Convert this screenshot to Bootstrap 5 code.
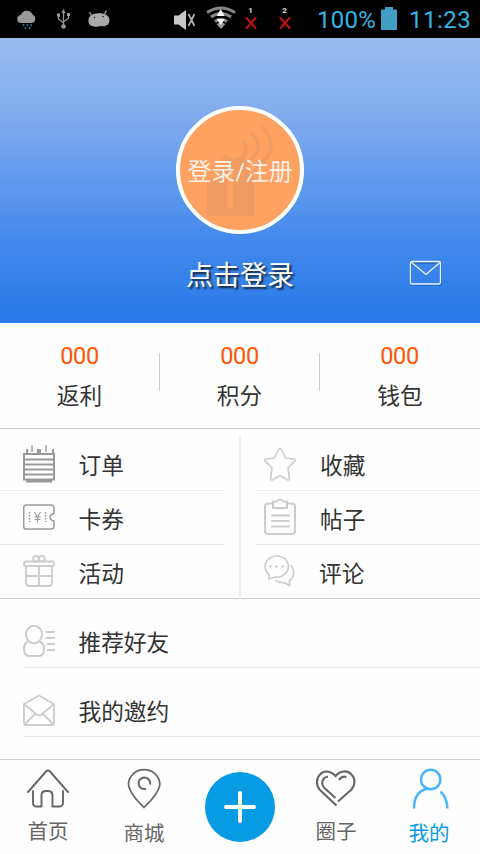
<!DOCTYPE html>
<html lang="zh-CN">
<head>
<meta charset="utf-8">
<meta name="viewport" content="width=device-width, initial-scale=1">
<title>我的</title>
<link rel="stylesheet" href="https://cdn.jsdelivr.net/npm/bootstrap@5.3.0/dist/css/bootstrap.min.css">
<style>
body{font-family:Roboto,"Noto Sans CJK SC",sans-serif;width:480px;height:854px;overflow:hidden;background:#fefefe;color:#333;line-height:1}
svg{display:block;flex:none;fill:none}
.status{height:38px;background:#000;color:#33b5e5;font-size:24px;padding:2px 9px 0 16px}
.status svg{margin-top:-2px}
.status>svg:nth-of-type(2){margin-right:-1px}
.pct{margin-left:24px;width:60px;letter-spacing:.3px}
.clock{letter-spacing:.5px;width:62px}
.hero{height:285px;background:linear-gradient(#9abcf0,#84aeef 24%,#4188eb 73%,#2878e9);color:#fff;padding-top:68px}
.avatar{width:128px;height:128px;border:4px solid #fff;background:#ffa261;display:grid;place-items:center}
.avatar>*{grid-area:1/1}
.avatar span{font-size:24px;line-height:30px;padding-top:4px;letter-spacing:-.2px;white-space:nowrap;color:#fff0e6;z-index:1}
.login{height:40px;margin-top:22px;display:grid;grid-template-columns:1fr auto 1fr}
.login b{font-weight:400;font-size:27px;line-height:40px;text-shadow:2px 2px 2px #123}
.login svg{justify-self:end;margin-right:37px;margin-top:2px}
.stats{height:106px;border-bottom:1px solid #ccc}
.stat{height:105px;padding-top:20px}
.stat:not(:last-child){background:linear-gradient(#ccc,#ccc) 100% 30px/1px 38px no-repeat}
.stat strong{font-weight:400;font-size:23.5px;line-height:26px;color:#ff5400;display:block;letter-spacing:-.4px;padding-right:1px}
.stat span{display:block;font-size:22.7px;line-height:30px;margin-top:13px;padding-right:1px}
.stat:last-child span{padding-right:0}
.menu{height:170px;border-bottom:1px solid #ccc;padding-top:8px}
.menu .left{width:239px;padding-right:15px}
.split{width:2px;background:#eee;height:162px}
.menu .right{width:239px;padding-left:15px}
.entry{height:54px;border-bottom:1px solid #eaeaea;font-size:22.7px}
.entry:last-child{border:0}
.entry:nth-child(2) svg{margin-top:-1px}
.entry:last-child svg{margin-top:-3px}
.left .entry{padding-left:23px}
.right .entry{padding-left:8px}
.entry span,.wide span{margin-left:23.500px;padding-top:7px;line-height:30px}
.right .entry span{margin-left:24px}
.entry:last-child span{padding-top:6px}
.list{height:160px;padding-left:23px}
.wide{height:69px;border-bottom:1px solid #eaeaea;font-size:22.7px}
.wide span{padding-top:22px}
.wide svg{margin-top:15px}
.tabs{height:95px;border-top:1px solid #ccc;color:#666;font-size:20.5px}
.tab{width:96px;padding-top:8px}
.tab span{line-height:24px;margin-top:10px}
.tab.low span{margin-top:12px}
.tab.low svg{margin-top:-1px;margin-bottom:1px}
.tab.me{color:#069be3}
.tab.me svg{margin:0 0 0 -3px}
.tab.me span{margin-left:-6px}
.plus{width:70px;height:70px;background:#069be3;margin-top:4px}
</style>
<script src="https://cdn.jsdelivr.net/npm/bootstrap@5.3.0/dist/js/bootstrap.bundle.min.js"></script>
</head>
<body>
<header class="status d-flex align-items-center">
<svg width="94" height="38" viewBox="16 0 94 38">
<path fill="#999" d="M21.500 23a4 4 0 0 1-.5-8 6 5.500 0 0 1 11.500-.5A4.500 4.500 0 0 1 32 23z"/>
<path stroke="#2f8299" stroke-width="1.400" d="M24 24l-.8 2M28 24l-.8 2M31.500 24l-.8 2M26 27l-.8 2M30 27l-.8 2"/>
<path stroke="#999" stroke-width="1.300" d="M63.500 12v14M58.500 15v4l5 4M68.500 15v3l-5 4"/><path fill="#999" d="M63.500 9l2 4h-4zM57 13.500h3v3h-3zM67 13h3v3h-3z"/><circle cx="63.500" cy="26.500" r="2.300" fill="#999"/>
<path fill="#aaa" d="M89 23.500c-2-5.500 1.500-9.500 7.500-10 6.500-1 12.500 1 13 6.500 0 5-4 7-8.500 6-4 1.500-11 1-12-2.500z"/><path stroke="#aaa" stroke-width="1.200" d="M91.500 16l-2-4M104.500 14l2-3.500"/><circle cx="94.500" cy="17.500" r=".8" fill="#222"/><circle cx="103" cy="16.500" r=".8" fill="#222"/>
</svg>
<svg class="ms-auto" width="122" height="38" viewBox="172 0 122 38">
<path fill="#c8c8c8" d="M174 15.500h4.500L186 10v20l-7.500-5.500H174z"/><path stroke="#aaa" stroke-width="1.800" d="M188.500 14l6 12M194.500 14l-6 12"/>
<path stroke="#888" stroke-width="3" d="M207 12.500q14-9 28 0M211 17q10-7 20 0M215 21.500q6-4.500 12 0"/><path fill="#999" d="M216.500 24q4.500-3 9 0l-4.500 5z"/><path fill="#fff" d="M220.700 9l4 7h-8zM220.700 25l4-6h-8z"/>
<text x="248.300" y="13" font-size="8" font-weight="700" fill="#ddd">1</text><text x="282.300" y="13" font-size="8" font-weight="700" fill="#ddd">2</text>
<path stroke="#b01212" stroke-width="2.400" d="M246 17.500l10 11M256 17.500l-10 11M280 17.500l10 11M290 17.500l-10 11"/>
</svg>
<span class="pct">100%</span>
<svg width="16" height="38" viewBox="383 0 16 38" class="ms-1 me-2"><path fill="#419fc4" d="M387 7h8v2.500h4V30h-16V9.500h4z"/></svg>
<span class="clock ms-1">11:23</span>
</header>
<section class="hero d-flex flex-column align-items-center">
<div class="avatar rounded-circle"><span>登录/注册</span>
<svg width="120" height="120" viewBox="180 110 120 120"><path fill="#f09b62" d="M207 178h11l2-19 6-4 7 4 10-4 9 23h2v38h-47z"/><path fill="#ffa261" d="M227 170h6v38h-6z"/><path stroke="#f09b62" stroke-width="4" stroke-linecap="round" d="M243 142q6 7-1 16M252 134q13 12-1 26M262 126q20 22-4 40"/></svg></div>
<div class="login w-100"><i></i><b>点击登录</b><svg width="35" height="28" viewBox="408 258 35 28"><g stroke="#124a80" stroke-opacity=".5" stroke-width="1.300" transform="translate(.8 1)"><rect x="410.500" y="262" width="30" height="22" rx="2"/></g><g stroke="#e8f4ff" stroke-width="1.300"><rect x="410.500" y="261.500" width="30" height="22.500" rx="2"/><path d="M411 262l15 12.500 14.500-12.500"/></g></svg></div>
</section>
<section class="stats d-flex text-center">
<div class="stat flex-fill w-100"><strong>000</strong><span>返利</span></div>
<div class="stat flex-fill w-100"><strong>000</strong><span>积分</span></div>
<div class="stat flex-fill w-100"><strong>000</strong><span>钱包</span></div>
</section>
<section class="menu d-flex">
<div class="left">
<div class="entry d-flex align-items-center"><svg width="32" height="38" viewBox="23 445 32 38" stroke="#999"><path stroke-width="2" d="M24 453v27M54 453v27M23 454h32M24 459.500h30M24 464.500h30M24 469.500h30M24 474.500h30M23 479.500h32M26 481.500h26M27 449v5M53 449v5"/><path stroke-width="4" d="M39 449v5"/><path stroke-width="1.300" d="M32 445v7M46 445v7"/></svg><span>订单</span></div>
<div class="entry d-flex align-items-center"><svg width="32" height="28" viewBox="23 503 32 28" stroke="#999" stroke-width="1.500"><path d="M26 505h25q3 0 3 3v5.500q-4 1-4 3.800t4 3.700v5q0 3-3 3H26q-2.300 0-2.300-3v-18q0-3 2.300-3z"/><path stroke-dasharray="1.500 1.500" d="M29.500 512v10M45.500 512v10"/><path stroke-width="1.100" d="M34.500 512l3 5 3-5M37.500 517v5.500M34.500 517h6M34.500 519.500h6"/></svg><span>卡券</span></div>
<div class="entry d-flex align-items-center"><svg width="32" height="32" viewBox="23 555 32 32" stroke="#ccc" stroke-width="1.800"><rect x="24" y="561.500" width="30" height="4.500" rx="1.500"/><path d="M26 566v17q0 3 3 3h20q3 0 3-3v-17M26 576h26M39 566v20"/><circle cx="36" cy="558.800" r="2.900"/><circle cx="42" cy="558.800" r="2.900"/></svg><span>活动</span></div>
</div>
<div class="split"></div>
<div class="right">
<div class="entry d-flex align-items-center"><svg width="32" height="34" viewBox="264 446 32 34" stroke="#ccc" stroke-width="1.700" stroke-linejoin="round"><path d="M278.500 448.500q1.500-2 3 0l4 8.500 8.500 1.200q2 .5.700 2l-6.700 6.800 1.500 10.500q0 2-2 1.200l-7.500-4-7.500 4q-2 .8-2-1.200l1.500-10.500-6.700-6.800q-1.300-1.500.7-2l8.500-1.200z"/></svg><span>收藏</span></div>
<div class="entry d-flex align-items-center"><svg width="32" height="38" viewBox="264 499 32 38" stroke="#ccc" stroke-width="2"><path d="M273 504.500h-5q-3 0-3 3V532q0 3 3 3h24q3 0 3-3v-24.500q0-3-3-3h-5"/><path d="M273 502.500h3.500q3.500-4.500 7 0h3.500v6.500h-14zM272 516.500h17M272 522h17M272 527.500h17" stroke-linecap="round"/></svg><span>帖子</span></div>
<div class="entry d-flex align-items-center"><svg width="31" height="32" viewBox="264 555 31 32" stroke="#ccc" stroke-width="1.600"><path d="M269 579v-4.500a11.700 10.500 0 1 1 6 2.500z"/><path d="M290.500 565q6.500 7 .5 14.500l-1.500 1v5l-5-3q-6 1-9.500-3"/><g fill="#ccc" stroke="none"><circle cx="270.500" cy="566.500" r="1.200"/><circle cx="276.500" cy="566.500" r="1.200"/><circle cx="282.500" cy="566.500" r="1.200"/></g></svg><span>评论</span></div>
</div>
</section>
<section class="list">
<div class="wide d-flex align-items-center"><svg width="32" height="32" viewBox="23 625 32 32" stroke="#ccc" stroke-width="2"><ellipse cx="34" cy="634.500" rx="8" ry="8.800"/><path d="M28 641.500q-4 2-4 7 0 7.500 5 7.500h10q5 0 5-7.500 0-5-4-7M45.500 632H55M45.500 638H55M47 644h8M47 650h8"/></svg><span>推荐好友</span></div>
<div class="wide d-flex align-items-center"><svg width="32" height="34" viewBox="23 693 32 34" stroke="#ccc" stroke-width="1.800"><path d="M24 704l15-8.500 15 8.500v19q0 2-2 2H26q-2 0-2-2zM24 704l12.500 10.500q2.500 1.500 5 0L54 704M25 724l10-10M53 724l-10-10"/></svg><span>我的邀约</span></div>
</section>
<nav class="tabs d-flex">
<div class="tab d-flex flex-column align-items-center"><svg width="42" height="42" viewBox="27 768 42 42" stroke="#666" stroke-width="1.900" stroke-linecap="round"><path d="M28 792l18-20.500q2-2 4 0L68 792M33 791v12q0 3.500 3.500 3.500h5v-11q0-4.500 4.500-4.500h2q4.500 0 4.500 4.500v11H59q4 0 4-3.500v-12"/></svg><span>首页</span></div>
<div class="tab low d-flex flex-column align-items-center"><svg width="34" height="42" viewBox="127 768 34 42" stroke="#666" stroke-width="1.700"><path d="M144 808.500q-15.500-15-15.500-24a15.700 15 0 0 1 31.300 0Q160 793 144 808.500z"/><path stroke-width="2" d="M146 789.800a5.800 5.800 0 1 1 4-4.300"/></svg><span>商城</span></div>
<div class="tab d-flex flex-column align-items-center"><div class="plus rounded-circle d-flex align-items-center justify-content-center"><svg width="34" height="34" stroke="#fff" stroke-width="4" stroke-linecap="round"><path d="M17 3v28M3 17h28"/></svg></div></div>
<div class="tab d-flex flex-column align-items-center"><svg width="42" height="42" viewBox="315 768 42 42" stroke="#666" stroke-width="2.100"><path d="M336.500 805.500L320 790c-4-4-4-12 0-15.500 4.500-5 12-3 15.500 1.500 4-5 11.500-6.500 16-1.500 4 4 4 10 0 15L338 801.500"/><path d="M328 776.500c-6 1-7.500 7.500-3.500 11.500l11 10M339 780q3-4.500 7.500-3"/></svg><span>圈子</span></div>
<div class="tab low me d-flex flex-column align-items-center"><svg width="38" height="42" viewBox="412 768 38 42" stroke="#46b4ff" stroke-width="2.400"><circle cx="430.700" cy="779.500" r="9.700"/><path d="M414 808.500q0-17 13.500-20M440.500 791.500q6.500 6 7 17"/></svg><span>我的</span></div>
</nav>
</body>
</html>
